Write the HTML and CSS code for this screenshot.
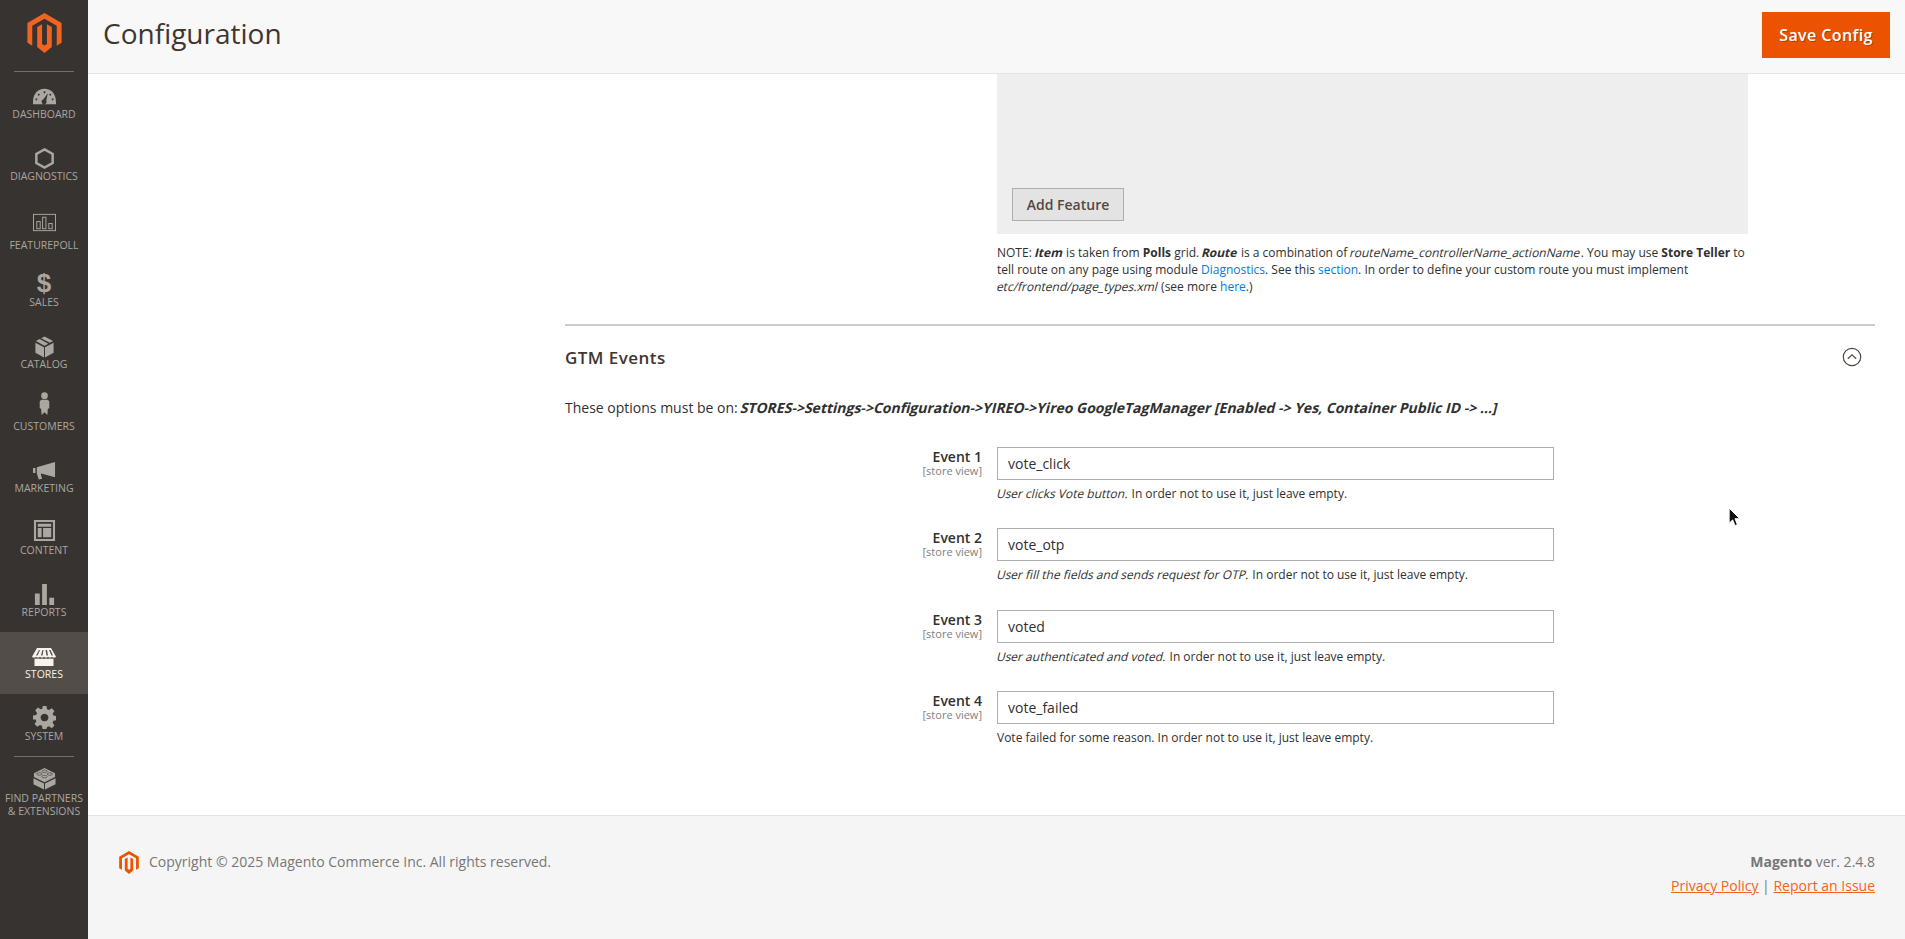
FILE: index.html
```html
<!DOCTYPE html>
<html>

<head>
    <title>Configuration</title>
    <link rel="stylesheet" href="styles.css">
</head>

<body>
    <nav class="sidebar">
        <div class="logo-box">
            <svg class="logo" viewBox="0 0 43.6 51">
                <path d="M21.8 0L0 12.6V38l6.200 3.600V16.300l15.600-9 15.600 9v25.300l6.200-3.600V12.600z" />
                <path d="M18.700 14.300l-6.200 3.600v25.300l9.300 7.800 9.300-7.800V17.900l-6.200-3.600v25.300l-3.100 1.800-3.100-1.800z" />
            </svg>
        </div>

        <a class="nav-item">
            <svg class="nav-icon" viewBox="0 0 24 24"><path fill-rule="evenodd" d="M0 20v-2C0 9 5 4 12 4s12 5 12 14v2zM12 6.500a1 1 0 1 0 .01 0zM6 9a1 1 0 1 0 .01 0zM18 9a1 1 0 1 0 .01 0zM3.500 14a1 1 0 1 0 .01 0zM20.500 14a1 1 0 1 0 .01 0zM15.500 8.500l-4.800 6.700a2.500 2.500 0 1 0 3.100 1.200z" /></svg>
            <span>Dashboard</span>
        </a>
        <a class="nav-item">
            <svg class="nav-icon" viewBox="0 0 24 24"><path fill="none" stroke="currentColor" stroke-width="2.600" d="M12 2.500l8.500 4.800v9.400L12 21.500l-8.500-4.800V7.300z" /></svg>
            <span>Diagnostics</span>
        </a>
        <a class="nav-item nav-item-tall">
            <svg class="nav-icon" viewBox="0 0 24 24"><g fill="none" stroke="currentColor" stroke-width="1"><rect x=".5" y="3.500" width="23" height="17" /><rect x="4" y="11" width="3.500" height="7.500" /><rect x="10" y="6.500" width="3.500" height="12" /><rect x="16.500" y="13" width="3.500" height="5.500" /></g></svg>
            <span>FeaturePoll</span>
        </a>
        <a class="nav-item">
            <span class="dollar">$</span>
            <span>Sales</span>
        </a>
        <a class="nav-item">
            <svg class="nav-icon" viewBox="0 0 24 24"><path d="M11.500 12.800L2.500 8v10.500l9 5zM12.500 12.800l9-4.800v10.500l-9 5zM3 6.300L7 4.200l9 4.800-4 2.200zM8.500 3.400L12 1.500l9 4.800-3.500 1.900z" /></svg>
            <span>Catalog</span>
        </a>
        <a class="nav-item">
            <svg class="nav-icon icon-customers" viewBox="0 0 24 24"><circle cx="12" cy="3.800" r="3.500" /><path d="M8.500 8h7l1.500 2v7l-1.500.5-.5 6.500-3-3-3 3-.5-6.500L7 17v-7z" /></svg>
            <span>Customers</span>
        </a>
        <a class="nav-item">
            <svg class="nav-icon" viewBox="0 0 24 24"><path d="M23 3v16L9.500 15.500H8l1.500 5-3.500 1-2-6.500V8.500zM0 9.500h2.500v5H0z" /></svg>
            <span>Marketing</span>
        </a>
        <a class="nav-item">
            <svg class="nav-icon icon-content" viewBox="0 0 24 24"><path fill-rule="evenodd" d="M1 1h22v22H1zM3.200 3.200v17.600h17.600V3.200zM5 5h14v3H5zM5 9.500h4v9.500H5zM10.500 9.500H19V19h-8.500z" /></svg>
            <span>Content</span>
        </a>
        <a class="nav-item">
            <svg class="nav-icon" viewBox="0 0 24 24"><path d="M2 11h5v12H2zM9.500 1h5v22h-5zM17 15.500h5V23h-5z" /></svg>
            <span>Reports</span>
        </a>
        <a class="nav-item active">
            <svg class="nav-icon icon-stores" viewBox="0 0 24 24" preserveAspectRatio="none"><path fill-rule="evenodd" d="M5 0h14l5 11.500c-.5 1.500-3.500 1.500-4 0-.5 1.500-3.500 1.500-4 0-.5 1.500-3.500 1.500-4 0-.5 1.500-3.500 1.500-4 0-.5 1.500-3.500 1.500-4 0-.5 1.500-3.500 1.500-4 0zM7 2.500L4 10h1.500L8 2.500zM10.500 2.500L9 10h1.500l1-7.500zM13.500 2.500l1 7.500H16l-1-7.500zM17 2.500l2.500 7.500H21l-2.500-7.500zM2.500 14c1 .5 2.500.5 3.500 0 1.500.8 3 .8 4 0 1 .8 3 .8 4 0 1 .8 2.500.8 4 0 1 .5 2.500.5 3.500 0V24h-19z" /></svg>
            <span>Stores</span>
        </a>
        <a class="nav-item">
            <svg class="nav-icon icon-system" viewBox="0 0 24 24"><path fill-rule="evenodd" d="M10 0h4l.7 3.400 2 .8L19.600 2.300l2.800 2.800-1.900 2.900.8 2 3.400.7v4l-3.400.7-.8 2 1.900 2.900-2.800 2.800-2.900-1.900-2 .8L14 24h-4l-.7-3.400-2-.8-2.900 1.900-2.800-2.800 1.900-2.900-.8-2L0 14v-4l3.400-.7.8-2L2.300 4.400 5.100 1.600 8 3.500l2-.8zM12 8a4 4 0 1 0 .01 0z" /></svg>
            <span>System</span>
        </a>
        <div class="nav-sep"></div>
        <a class="nav-item nav-item-last">
            <svg class="nav-icon" viewBox="0 0 24 24">
                <path d="M12 1l11 5.500v4L12 16 1 10.500v-4zM.5 11.800L11.500 17.300v6.200L.5 18zM23.500 11.800L12.500 17.300v6.200L23.500 18z" />
                <g class="studs"><ellipse cx="12" cy="4.500" rx="2.800" ry="1.300" /><ellipse cx="6.500" cy="7.300" rx="2.800" ry="1.300" /><ellipse cx="17.500" cy="7.300" rx="2.800" ry="1.300" /><ellipse cx="12" cy="10" rx="2.800" ry="1.300" /></g>
            </svg>
            <span>Find Partners<br>&amp; Extensions</span>
        </a>
    </nav>

    <div class="main">
        <header class="page-header">
            <h1>Configuration</h1>
            <button class="save-btn">Save Config</button>
        </header>

        <div class="content">
            <div class="feature-block">
                <div class="feature-box">
                    <button class="add-btn">Add Feature</button>
                </div>
                <p class="feature-note">NOTE: <b class="slant">Item</b> is taken from <b>Polls</b> grid. <b class="slant">Route</b> is a combination of <span class="slant">routeName_controllerName_actionName</span>. You may use <b>Store Teller</b> to tell route on any page using module <a href="#">Diagnostics</a>. See this <a href="#">section</a>. In order to define your custom route you must implement <span class="slant">etc/frontend/page_types.xml</span> (see more <a href="#">here</a>.)</p>
            </div>

            <section class="events">
                <div class="events-head">
                    <h2>GTM Events</h2>
                    <svg class="chevron" viewBox="0 0 20 20"><circle cx="10" cy="10" r="8.700" /><path d="M5.800 11.800L10 7.800l4.200 4" /></svg>
                </div>
                <p class="events-intro">These options must be on: <b class="slant">STORES-&gt;Settings-&gt;Configuration-&gt;YIREO-&gt;Yireo GoogleTagManager [Enabled -&gt; Yes, Container Public ID -&gt; ...]</b></p>

                <div class="field">
                    <label>Event 1<small>[store view]</small></label>
                    <div>
                        <input type="text" value="vote_click">
                        <p class="hint"><span class="slant">User clicks Vote button.</span> In order not to use it, just leave empty.</p>
                    </div>
                </div>
                <div class="field">
                    <label>Event 2<small>[store view]</small></label>
                    <div>
                        <input type="text" value="vote_otp">
                        <p class="hint"><span class="slant">User fill the fields and sends request for OTP.</span> In order not to use it, just leave empty.</p>
                    </div>
                </div>
                <div class="field">
                    <label>Event 3<small>[store view]</small></label>
                    <div>
                        <input type="text" value="voted">
                        <p class="hint"><span class="slant">User authenticated and voted.</span> In order not to use it, just leave empty.</p>
                    </div>
                </div>
                <div class="field">
                    <label>Event 4<small>[store view]</small></label>
                    <div>
                        <input type="text" value="vote_failed">
                        <p class="hint">Vote failed for some reason. In order not to use it, just leave empty.</p>
                    </div>
                </div>
            </section>
        </div>

        <footer class="page-footer">
            <div class="copyright">
                <svg class="footer-logo" viewBox="0 0 43.6 51">
                    <path d="M21.800 0L0 12.600V38l6.200 3.600V16.300l15.600-9 15.600 9v25.300l6.200-3.600V12.600z" />
                    <path d="M18.700 14.300l-6.200 3.600v25.300l9.300 7.800 9.300-7.800V17.900l-6.200-3.600v25.300l-3.100 1.800-3.100-1.800z" />
                </svg>
                <span>Copyright © 2025 Magento Commerce Inc. All rights reserved.</span>
            </div>
            <div class="legal">
                <p><b>Magento</b> ver. 2.4.8</p>
                <p><a href="#">Privacy Policy</a> | <a href="#">Report an Issue</a></p>
            </div>
        </footer>
    </div>

    <!-- mouse pointer caught in the shot -->
    <svg class="pointer" viewBox="0 0 12 18"><path d="M1 1v13l3-3 2 5 2-1-2-5h4z" /></svg>
</body>

</html>
```

FILE: styles.css
```css
* {
    box-sizing: border-box;
}

body {
    margin: 0;
    height: 939px;
    overflow: hidden;
    display: flex;
    font-family: 'Open Sans', sans-serif;
    font-size: 14px;
    color: #303030;
    background-color: #fff;
}

a {
    color: #007bdb;
    text-decoration: none;
}

/* The page's italics are the upright faces leaned over, not the true italic */
.slant {
    display: inline-block;
    transform: skewX(-14deg);
}

/* Sidebar */
.sidebar {
    flex: 0 0 88px;
    background-color: #373330;
    color: #aaa6a0;
}

.logo-box {
    height: 72px;
    margin: 0 14px;
    padding-top: 13px;
    border-bottom: 1px solid #736e69;
    text-align: center;
}

.logo {
    width: 35px;
    height: 40px;
    fill: #f26322;
}

.nav-item {
    display: flex;
    flex-direction: column;
    align-items: center;
    height: 62px;
    padding-top: 13px;
    color: #aaa6a0;
    font-size: 10.5px;
    line-height: 13px;
    text-align: center;
    text-transform: uppercase;
}

.nav-item-tall {
    height: 64px;
    padding-top: 15px;
}

.nav-item-tall .nav-icon {
    margin-bottom: 5px;
}

.nav-item.active {
    background-color: #524d49;
    color: #f7f3eb;
}

.nav-sep {
    height: 1px;
    margin: 0 14px;
    background-color: #736e69;
}

.nav-item-last {
    padding-top: 10px;
}

.nav-item-last .nav-icon {
    margin-bottom: 2px;
}

.nav-icon {
    flex: none;
    width: 23px;
    height: 23px;
    fill: currentColor;
}

.nav-icon.icon-customers {
    margin: -5px 0 5px;
}

.nav-icon.icon-content {
    margin: -2px 0 2px;
}

.nav-icon.icon-system {
    margin: -1px 0 1px;
}

.nav-icon.icon-stores {
    width: 24px;
    height: 18px;
    margin: 3px 0 2px;
}

.studs {
    fill: none;
    stroke: #373330;
    stroke-width: 0.600;
}

.dollar {
    height: 23px;
    font-family: 'Liberation Sans', sans-serif;
    font-size: 26px;
    font-weight: bold;
    line-height: 20px;
}

/* Page header */
.main {
    flex: 1;
    display: flex;
    flex-direction: column;
    min-width: 0;
}

.page-header {
    flex: none;
    height: 74px;
    padding: 0 15px 0 15px;
    display: flex;
    justify-content: space-between;
    align-items: flex-start;
    background-color: #f8f8f8;
    border-bottom: 1px solid #e3e3e3;
}

.page-header h1 {
    margin: 14px 0 0;
    font-size: 28px;
    font-weight: 400;
    line-height: 38px;
    color: #41362f;
}

.save-btn {
    width: 128px;
    height: 46px;
    margin-top: 12px;
    padding-bottom: 2px;
    border: none;
    background-color: #eb5202;
    color: #fff;
    font-family: inherit;
    font-size: 16px;
    font-weight: 600;
    letter-spacing: 0.4px;
    text-shadow: 1px 1px 0 rgba(0, 0, 0, 0.25);
}

/* Config area */
.content {
    flex: 1;
    padding: 0 30px 0 477px;
}

.feature-block {
    padding-left: 432px;
    width: 1183px;
}

.feature-box {
    height: 160px;
    padding: 114px 0 0 15px;
    background-color: #eee;
}

.add-btn {
    width: 112px;
    height: 33px;
    border: 1px solid #adadad;
    background-color: #e3e3e3;
    color: #514943;
    font-family: inherit;
    font-size: 14px;
    font-weight: 600;
}

.feature-note {
    margin: 10px 0 0;
    font-size: 12px;
    line-height: 17px;
}

.events {
    margin-top: 28.500px;
    border-top: 2px solid #ccc;
}

.events-head {
    display: flex;
    justify-content: space-between;
    align-items: center;
    height: 63px;
    padding-right: 13px;
}

.events-head h2 {
    margin: 0;
    font-size: 17px;
    font-weight: 600;
    letter-spacing: 0.45px;
    color: #41362f;
}

.chevron {
    width: 20px;
    height: 20px;
    fill: none;
    stroke: #514943;
    stroke-width: 1.200;
}

.events-intro {
    margin: 9px 0 30px;
    line-height: 19px;
}

.field {
    display: grid;
    grid-template-columns: 417px 557px;
    column-gap: 15px;
    height: 81.500px;
}

.field label {
    padding-top: 1px;
    text-align: right;
    font-weight: 600;
    line-height: 17px;
    color: #303030;
}

.field small {
    display: block;
    font-size: 11px;
    font-weight: 400;
    line-height: 11px;
    color: #808080;
}

.field input {
    display: block;
    width: 100%;
    height: 33px;
    padding: 0 10px;
    border: 1px solid #adadad;
    font-family: inherit;
    font-size: 14px;
    color: #303030;
}

.hint {
    margin: 5px 0 0;
    font-size: 12px;
    line-height: 17px;
    color: #303030;
}

/* Footer */
.page-footer {
    flex: none;
    height: 124px;
    padding: 34px 30px 0;
    display: flex;
    justify-content: space-between;
    background-color: #f5f5f5;
    border-top: 1px solid #e3e3e3;
    color: #777;
    font-size: 14px;
}

.copyright {
    display: flex;
    align-items: flex-start;
    gap: 10px;
    line-height: 24px;
}

.footer-logo {
    width: 20px;
    height: 23px;
    margin: 1px 0 0 1px;
    fill: #eb5202;
}

.legal {
    text-align: right;
    line-height: 24px;
}

.legal p {
    margin: 0;
}

.legal a {
    color: #f26322;
    text-decoration: underline;
}

/* Cursor */
.pointer {
    position: absolute;
    left: 1728px;
    top: 507px;
    width: 14px;
    height: 21px;
    fill: #111;
    stroke: #fff;
    stroke-width: 0.800;
}
```
